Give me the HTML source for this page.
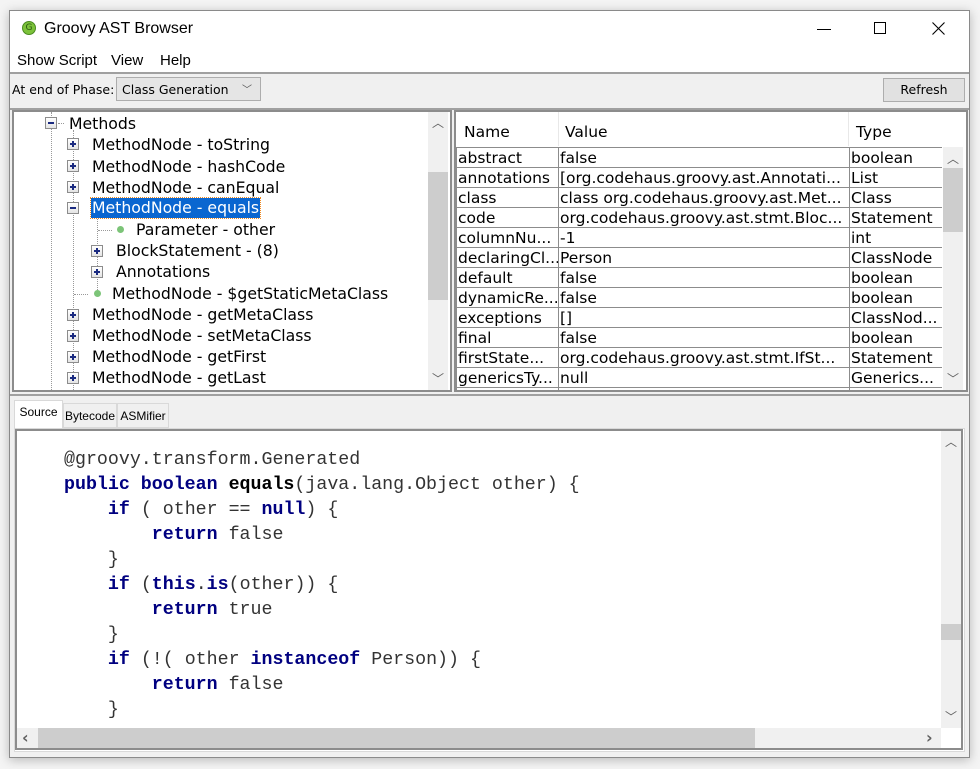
<!DOCTYPE html>
<html><head><meta charset="utf-8"><style>
*{box-sizing:border-box;margin:0;padding:0}
body{width:980px;height:769px;background:#f4f4f4;position:relative;overflow:hidden;font-family:"DejaVu Sans","Liberation Sans",sans-serif;color:#000}
.a{position:absolute}
.win{left:9px;top:10px;width:961px;height:748px;background:#f0f0f0;border:1px solid #8a8a8a;box-shadow:0 2px 10px rgba(0,0,0,.25)}
.title{left:10px;top:11px;width:959px;height:61px;background:#fff}
.t{font-size:15px;white-space:nowrap}
.tree .r{position:absolute;font-size:15.7px;white-space:nowrap;height:20px;line-height:20px}
.ex{position:absolute;width:12px;height:12px;border:1px solid #8c8c8c;background:linear-gradient(#fff,#e4e4e4)}
.ex:before{content:"";position:absolute;left:2px;top:4px;width:6px;height:2px;background:#1a2a80}
.ex.p:after{content:"";position:absolute;left:4px;top:2px;width:2px;height:6px;background:#1a2a80}
.dot{position:absolute;width:7px;height:7px;border-radius:50%;background:#7cc478}
.vd{position:absolute;border-left:1px dotted #999}
.hd{position:absolute;border-top:1px dotted #999}
table{border-collapse:collapse;font-size:15.5px}
td{border:1px solid #8c8c8c;height:20px;line-height:18px;padding:0 1px;white-space:nowrap;overflow:hidden}
.code{font-family:"Liberation Mono",monospace;font-size:18.3px;white-space:pre;line-height:25px;color:#333}
.code b{color:#000080}
.sb{background:#f0f0f0}
.th{background:#cdcdcd}
.arr{font-size:12px;color:#606060}
.tab{position:absolute;border:1px solid #d9d9d9;font-family:"Liberation Sans",sans-serif;font-size:12px;white-space:nowrap;text-align:center}
</style></head><body>
<div class="a win"></div>
<div class="a title"></div>
<div class="a" style="left:22px;top:21px;width:14px;height:14px;border-radius:50%;background:#7cc23a;border:1px solid #4a8a20;font-size:9px;line-height:12px;text-align:center;color:#2a5a10">G</div>
<div class="a t" style="left:44px;top:20px;font-family:'Liberation Sans',sans-serif;font-size:16px">Groovy AST Browser</div>
<div class="a" style="left:817px;top:29px;width:14px;height:1px;background:#000"></div>
<div class="a" style="left:874px;top:22px;width:12px;height:12px;border:1px solid #000"></div>
<svg class="a" style="left:932px;top:22px" width="13" height="13"><path d="M0.5 0.5L12.5 12.5M12.5 0.5L0.5 12.5" stroke="#000" stroke-width="1.1"/></svg>
<div class="a t" style="left:17px;top:52px;font-family:'Liberation Sans',sans-serif;font-size:15px">Show Script</div>
<div class="a t" style="left:111px;top:52px;font-family:'Liberation Sans',sans-serif;font-size:15px">View</div>
<div class="a t" style="left:160px;top:52px;font-family:'Liberation Sans',sans-serif;font-size:15px">Help</div>
<div class="a" style="left:10px;top:72px;width:959px;height:2px;background:#a0a0a0"></div>
<div class="a" style="left:12px;top:82px;font-size:12.5px">At end of Phase:</div>
<div class="a" style="left:116px;top:77px;width:145px;height:24px;border:1px solid #adadad;background:#e5e5e5;font-size:12.5px;padding:4px 0 0 5px">Class Generation<span style="position:absolute;right:8px;top:3px;font-size:10px;color:#555">﹀</span></div>
<div class="a" style="left:883px;top:78px;width:82px;height:24px;border:1px solid #adadad;background:#e1e1e1;font-size:12.5px;text-align:center;line-height:22px">Refresh</div>
<div class="a" style="left:10px;top:108px;width:959px;height:2px;background:#a0a0a0"></div>
<!-- tree -->
<div class="a" style="left:12px;top:110px;width:440px;height:282px;border:2px solid #8c8c8c;background:#fff"></div>
<div class="a tree" style="left:14px;top:112px;width:414px;height:278px;overflow:hidden">
<div class="vd" style="left:37px;top:0;height:278px"></div>
<div class="vd" style="left:59px;top:18px;height:260px"></div>
<div class="vd" style="left:83px;top:102px;height:76px"></div>
<div class="ex" style="left:31px;top:5px"></div><div class="hd" style="left:44px;top:11px;width:6px"></div>
<div class="r" style="left:55px;top:2px">Methods</div>
<div class="ex p" style="left:53px;top:26px"></div><div class="r" style="left:78px;top:23px">MethodNode - toString</div>
<div class="ex p" style="left:53px;top:48px"></div><div class="r" style="left:78px;top:45px">MethodNode - hashCode</div>
<div class="ex p" style="left:53px;top:69px"></div><div class="r" style="left:78px;top:66px">MethodNode - canEqual</div>
<div class="ex" style="left:53px;top:90px"></div>
<div class="r" style="left:77px;top:86px;background:#0a66d0;color:#fff;padding:0 1px;outline:1px dotted #f08a20">MethodNode - equals</div>
<div class="hd" style="left:84px;top:118px;width:14px"></div><div class="dot" style="left:103px;top:114px"></div>
<div class="r" style="left:122px;top:108px">Parameter - other</div>
<div class="ex p" style="left:77px;top:133px"></div><div class="r" style="left:102px;top:129px">BlockStatement - (8)</div>
<div class="ex p" style="left:77px;top:154px"></div><div class="r" style="left:102px;top:150px">Annotations</div>
<div class="hd" style="left:60px;top:182px;width:14px"></div><div class="dot" style="left:80px;top:178px"></div>
<div class="r" style="left:98px;top:172px">MethodNode - $getStaticMetaClass</div>
<div class="ex p" style="left:53px;top:197px"></div><div class="r" style="left:78px;top:193px">MethodNode - getMetaClass</div>
<div class="ex p" style="left:53px;top:218px"></div><div class="r" style="left:78px;top:214px">MethodNode - setMetaClass</div>
<div class="ex p" style="left:53px;top:239px"></div><div class="r" style="left:78px;top:235px">MethodNode - getFirst</div>
<div class="ex p" style="left:53px;top:260px"></div><div class="r" style="left:78px;top:256px">MethodNode - getLast</div>
</div>
<div class="a sb" style="left:428px;top:112px;width:20px;height:278px"></div>
<div class="a th" style="left:428px;top:172px;width:20px;height:128px"></div>
<div class="a arr" style="left:432px;top:114px">︿</div>
<div class="a arr" style="left:432px;top:370px">﹀</div>
<!-- table -->
<div class="a" style="left:454px;top:110px;width:514px;height:282px;border:2px solid #8c8c8c;background:#fff"></div>
<div class="a" style="left:456px;top:112px;width:485px;height:34px;background:#fff;font-size:15.5px">
<span class="a" style="left:8px;top:11px">Name</span><span class="a" style="left:109px;top:11px">Value</span><span class="a" style="left:400px;top:11px">Type</span>
<div class="a" style="left:102px;top:0;width:1px;height:34px;background:#e8e8e8"></div>
<div class="a" style="left:392px;top:0;width:1px;height:34px;background:#e8e8e8"></div>
</div>
<div class="a" style="left:456px;top:147px;width:486px;height:243px;overflow:hidden">
<table style="width:486px;table-layout:fixed"><colgroup><col style="width:102px"><col style="width:291px"><col style="width:93px"></colgroup>
<tr><td>abstract</td><td>false</td><td>boolean</td></tr>
<tr><td>annotations</td><td>[org.codehaus.groovy.ast.Annotati...</td><td>List</td></tr>
<tr><td>class</td><td>class org.codehaus.groovy.ast.Met...</td><td>Class</td></tr>
<tr><td>code</td><td>org.codehaus.groovy.ast.stmt.Bloc...</td><td>Statement</td></tr>
<tr><td>columnNu...</td><td>-1</td><td>int</td></tr>
<tr><td>declaringCl...</td><td>Person</td><td>ClassNode</td></tr>
<tr><td>default</td><td>false</td><td>boolean</td></tr>
<tr><td>dynamicRe...</td><td>false</td><td>boolean</td></tr>
<tr><td>exceptions</td><td>[]</td><td>ClassNod...</td></tr>
<tr><td>final</td><td>false</td><td>boolean</td></tr>
<tr><td>firstState...</td><td>org.codehaus.groovy.ast.stmt.IfSt...</td><td>Statement</td></tr>
<tr><td>genericsTy...</td><td>null</td><td>Generics...</td></tr>
<tr><td>x</td><td></td><td></td></tr>
</table></div>
<div class="a sb" style="left:943px;top:147px;width:20px;height:243px"></div>
<div class="a th" style="left:943px;top:168px;width:20px;height:64px"></div>
<div class="a arr" style="left:947px;top:150px">︿</div>
<div class="a arr" style="left:947px;top:370px">﹀</div>
<div class="a" style="left:10px;top:394px;width:959px;height:2px;background:#a0a0a0"></div>
<!-- tabs -->
<div class="tab" style="left:14px;top:400px;width:49px;height:29px;background:#fff;border-bottom:none;padding-top:4px">Source</div>
<div class="tab" style="left:63px;top:403px;width:54px;height:25px;padding-top:5px">Bytecode</div>
<div class="tab" style="left:117px;top:403px;width:52px;height:25px;padding-top:5px">ASMifier</div>
<div class="a" style="left:14px;top:428px;width:951px;height:324px;border:1px solid #d9d9d9;background:#fff"></div>
<div class="a" style="left:15px;top:429px;width:948px;height:321px;border:2px solid #8c8c8c;background:#fff"></div>
<div class="a code" style="left:64px;top:448px">@groovy.transform.Generated
<b>public boolean</b> <b style="color:#000">equals</b>(java.lang.Object other) {
    <b>if</b> ( other == <b>null</b>) {
        <b>return</b> false
    }
    <b>if</b> (<b>this</b>.<b>is</b>(other)) {
        <b>return</b> true
    }
    <b>if</b> (!( other <b>instanceof</b> Person)) {
        <b>return</b> false
    }</div>
<div class="a sb" style="left:941px;top:431px;width:20px;height:297px"></div>
<div class="a th" style="left:941px;top:624px;width:20px;height:16px"></div>
<div class="a arr" style="left:945px;top:433px">︿</div>
<div class="a arr" style="left:945px;top:708px">﹀</div>
<div class="a sb" style="left:17px;top:728px;width:924px;height:20px"></div>
<div class="a th" style="left:38px;top:728px;width:717px;height:20px"></div>
<div class="a" style="left:22px;top:728px;font-size:16px;color:#606060;font-weight:bold">‹</div>
<div class="a" style="left:926px;top:728px;font-size:16px;color:#606060;font-weight:bold">›</div>
</body></html>
